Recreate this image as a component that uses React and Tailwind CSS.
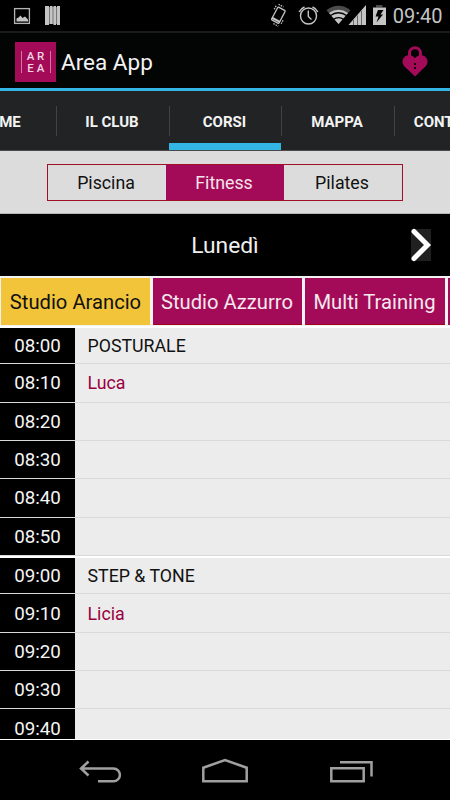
const tabs = ["HOME", "IL CLUB", "CORSI", "MAPPA", "CONTATTI"];

const categorie = ["Piscina", "Fitness", "Pilates"];

const orari = [
  { ora: "08:00", corso: "POSTURALE" },
  { ora: "08:10", istruttore: "Luca" },
  { ora: "08:20" },
  { ora: "08:30" },
  { ora: "08:40" },
  { ora: "08:50" },
  { ora: "09:00", corso: "STEP & TONE" },
  { ora: "09:10", istruttore: "Licia" },
  { ora: "09:20" },
  { ora: "09:30" },
  { ora: "09:40" },
];

function StatusBar() {
  return (
    <div className="flex h-[33px] shrink-0 items-start border-b-2 border-[#1b1b1b] bg-black">
      <svg width="70" height="31" viewBox="0 0 70 31" fill="#c4c4c4">
        <rect x="14.6" y="8.6" width="14.8" height="14.8" fill="none" stroke="#b4b4b4" strokeWidth="1.3" />
        <path d="M16.5 21.5V18.5L18.5 17.5L20.5 15.5L22.5 18L25 16.5L28 19.5V21.5Z" />
        <path d="M45 6H49V25H45ZM50 6H52.5V24H50ZM53.5 6H56V25H53.5ZM57 6H60V25H57Z" />
        <path d="M49 7H57V24H49Z" opacity=".6" />
      </svg>
      <svg className="ml-auto" width="122" height="31" viewBox="265 0 122 31" fill="none" stroke="#c4c4c4">
        <g transform="rotate(28 277.5 15)">
          <rect x="273.3" y="8" width="8.4" height="14.5" rx="1" strokeWidth="1.3" />
          <path d="M273 20.5H282" strokeWidth="2" />
          <path d="M272.5 5.5H278M271 8V12M284 17.5V22.5M277 25H282.5" strokeWidth="1.3" strokeDasharray="1.5 1" />
        </g>
        <circle cx="307.5" cy="16" r="8" strokeWidth="1.4" />
        <path d="M307.3 10.5V16.5L310.5 19.5" strokeWidth="1.4" />
        <path d="M298.2 12A10 10 0 0 1 303.5 7M311.5 7A10 10 0 0 1 316.8 12" strokeWidth="1.7" />
        <g stroke="none">
          <path d="M337.5 24L325.5 10.2Q337.5 1.5 349.5 10.2Z" fill="#4b4b4b" />
          <path d="M337.5 24L328 13Q337.5 6.5 347 13Z" fill="#c4c4c4" />
        </g>
        <path d="M329 15.7Q337.5 9.8 346 15.7M332 19.5Q337.5 15.7 343 19.5" stroke="#000" strokeWidth="1.3" />
        <path d="M347.5 25L365 5V25Z" fill="#c4c4c4" stroke="none" />
        <path d="M352.5 20V25M356.5 15.5V25M360.5 11V25" stroke="#666" strokeWidth="1" />
        <path d="M375 5H381.5V7.5H375Z" fill="#4b4b4b" stroke="none" />
        <path d="M372 7.5H385V25H372Z" fill="#c4c4c4" stroke="none" />
        <path d="M377 10L374.5 16.5H377.5L375.5 22.5L382 14.5H379.5L382.5 10Z" fill="#000" stroke="none" />
      </svg>
      <span className="ml-[4.5px] mr-[7.5px] pt-0.5 text-[20px] leading-7 text-[#c4c4c4]">09:40</span>
    </div>
  );
}

function Header() {
  return (
    <header className="flex h-[55px] shrink-0 items-center bg-[#030505] pl-[15px] pr-[22px]">
      <div className="mt-0.5 flex h-10 w-[41px] items-center justify-center gap-1 bg-[#a30b58] text-[#f0d5e2]">
        <span className="h-[22px] w-px bg-[#cf7aa3]" />
        <div className="grid w-5 grid-cols-2 text-center text-[11.5px] font-medium leading-3">
          <span>A</span>
          <span>R</span>
          <span>E</span>
          <span>A</span>
        </div>
        <span className="h-[22px] w-px bg-[#cf7aa3]" />
      </div>
      <h1 className="ml-[5px] mt-[3px] text-[22.5px] leading-7 text-[#f3f3f3]">Area App</h1>
      <svg className="ml-auto" width="26" height="32" viewBox="0 0 26 32">
        <path d="M7.5 11V8.2A5.5 5.5 0 0 1 18.5 8.2V11" fill="none" stroke="#a30b58" strokeWidth="3" />
        <path d="M13 31.5L2.5 21.5C-1.5 17 1 11.5 5 10.5C8.5 9.5 11 11 13 13C15 11 17.5 9.5 21 10.5C25 11.5 27.5 17 23.5 21.5Z" fill="#a30b58" />
        <path d="M12 18H14V20H12ZM12 22H14V24H12Z" fill="#180109" />
      </svg>
    </header>
  );
}

function Tabs() {
  return (
    <nav className="flex h-[63px] shrink-0 justify-center overflow-hidden border-b border-t-[3px] border-b-[#4a4a4a] border-t-[#33b5e5] bg-[#212324]">
      {tabs.map((tab) => (
        <div
          key={tab}
          className="relative flex h-[59px] w-[112.5px] shrink-0 items-center justify-center pr-px pt-[3px] text-[15px] font-bold text-[#f3f3f3]"
        >
          {tab !== "HOME" && <span className="absolute left-0 top-[15px] h-[30px] w-px bg-[#414344]" />}
          {tab}
          {tab === "CORSI" && <span className="absolute bottom-0 left-0 h-[7px] w-full bg-[#33b5e5]" />}
        </div>
      ))}
    </nav>
  );
}

function Categorie() {
  return (
    <div className="flex h-[63px] shrink-0 justify-center border-b border-[#b5b5b5] bg-[#dcdcdc] pt-[13px]">
      <div className="grid h-[37px] w-[356px] grid-cols-3 border border-[#a01028]">
        {categorie.map((nome) => (
          <div
            key={nome}
            className={`flex items-center justify-center pr-0.5 pt-0.5 text-[17.75px] ${
              nome === "Fitness" ? "bg-[#a30b58] text-[#f3e3eb]" : "text-[#111]"
            }`}
          >
            {nome}
          </div>
        ))}
      </div>
    </div>
  );
}

function Giorno() {
  return (
    <div className="grid h-[62px] shrink-0 grid-cols-[1fr_auto_1fr] items-center bg-black">
      <span className="col-start-2 pt-0.5 text-[22.8px] text-[#f0f0f0]">Lunedì</span>
      <svg className="mr-[18px] justify-self-end" width="22" height="34" viewBox="0 0 22 34">
        <rect x="1" y="1" width="20" height="32" fill="#202020" />
        <path d="M4 3.5L17.5 17L4 30.5" fill="none" stroke="#fff" strokeWidth="5" strokeLinecap="round" />
      </svg>
    </div>
  );
}

function Studi() {
  return (
    <div className="flex h-[50px] shrink-0 gap-[3px] overflow-hidden border-b border-t-2 border-[#f2f2f2] bg-[#f2f2f2] pl-px text-[20.2px] text-[#f5e8ee]">
      <div className="flex w-[149px] shrink-0 items-center justify-center bg-[#f2c43a] pt-px text-[#111]">Studio Arancio</div>
      <div className="flex w-[149px] shrink-0 items-center justify-center border-b border-[#a00018] bg-[#a30b58] pr-px pt-0.5">Studio Azzurro</div>
      <div className="flex w-[140px] shrink-0 items-center justify-center border-b border-[#a00018] bg-[#a30b58] pr-px pt-0.5">Multi Training</div>
      <div className="flex-1 bg-[#a30b58]" />
    </div>
  );
}

function Orari() {
  return (
    <div className="flex min-h-0 flex-1 flex-col overflow-hidden border-b border-white">
      {orari.map(({ ora, corso, istruttore }) => (
        <div
          key={ora}
          className={`flex h-[38.35px] shrink-0 border-b border-[#d9d9d9] bg-[#ececec] ${
            ora.endsWith(":00") ? "border-t-2 border-t-white" : ""
          }`}
        >
          <div className="flex w-[75px] items-center justify-center bg-black pt-px text-[18.75px] text-[#f5f5f5]">
            {ora}
          </div>
          <div
            className={`flex items-center pl-[12.5px] pt-[1.5px] text-[17.75px] ${
              istruttore ? "text-[#99003f]" : "text-[#111]"
            }`}
          >
            {corso || istruttore}
          </div>
        </div>
      ))}
    </div>
  );
}

function NavBar() {
  return (
    <div className="h-[60px] shrink-0 bg-black">
      <svg width="450" height="60" viewBox="0 0 450 60" fill="none" stroke="#a0a0a0" strokeWidth="2.5">
        <path d="M81 28.5H113.5A6.4 6.4 0 0 1 113.5 41.3H98M88.5 21.5L81 28.5L88.5 35.5" />
        <path d="M203.3 41.3V27.7L225 20L246.7 27.7V41.3Z" />
        <path d="M331.3 28.3H363.7V41.3H331.3ZM340 22.3H371.5V36.5" />
      </svg>
    </div>
  );
}

export default function App() {
  return (
    <div className="flex h-[800px] w-[450px] flex-col overflow-hidden bg-black font-['Roboto',sans-serif]">
      <StatusBar />
      <Header />
      <Tabs />
      <Categorie />
      <Giorno />
      <Studi />
      <Orari />
      <NavBar />
    </div>
  );
}
